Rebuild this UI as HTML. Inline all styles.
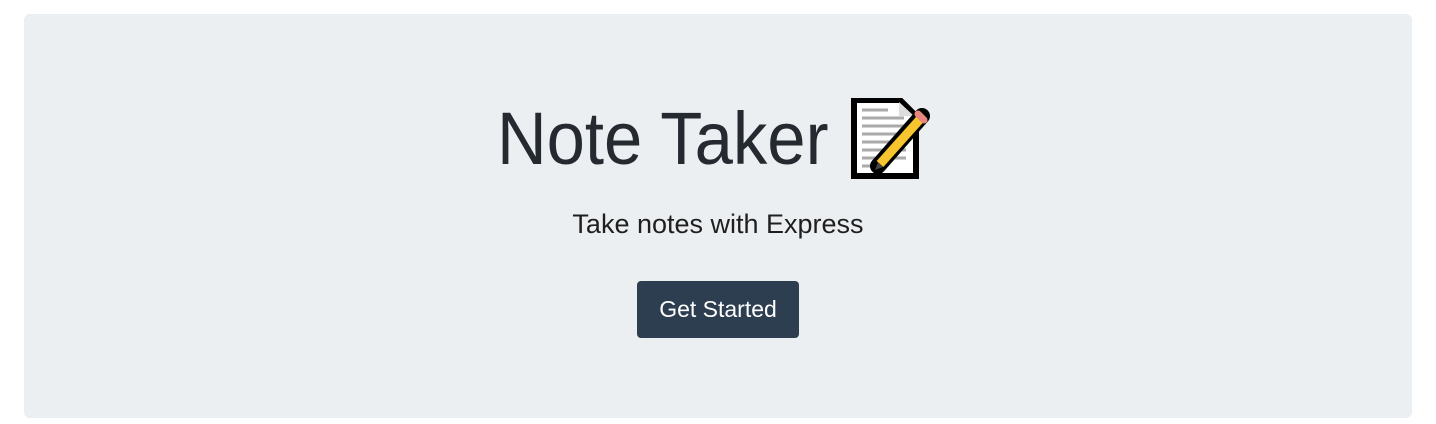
<!DOCTYPE html>
<html><head><style>
body{margin:0;background:#fff;width:1436px;height:424px;overflow:hidden;font-family:"Liberation Sans",sans-serif}
.j{position:absolute;left:24px;top:14px;width:1388px;height:404px;background:#eceff1;border-radius:6px}
h1{position:absolute;left:0;width:1436px;top:96px;margin:0;font-weight:normal;font-size:74px;line-height:86px;color:#252a31;text-align:center}
.t{display:inline-block;transform:scaleX(0.93);transform-origin:right center;vertical-align:top}
p{position:absolute;left:0;width:1436px;top:206px;margin:0;text-align:center;font-size:27px;line-height:36px;color:#1f1f1f}
.p2{display:inline-block;transform:scaleX(1.0)}
.b{position:absolute;left:637px;top:281px;width:162px;height:57px;background:#2c3e50;border-radius:4px;color:#fff;font-size:23px;line-height:57px;text-align:center}
svg{position:absolute;left:850px;top:98px}
</style></head><body>
<div class="j"></div>
<h1><span class="t">Note Taker</span><span style="display:inline-block;width:136px"></span></h1>
<svg width="84" height="82" viewBox="0 0 84 82">
<path d="M4 2H50L66 18V78H4Z" fill="#fff" stroke="#000" stroke-width="6" stroke-linejoin="miter"/>
<path d="M49 4V18H64" fill="#ddd"/>
<g stroke="#aaa" stroke-width="3">
<line x1="12" y1="12" x2="38" y2="12"/><line x1="12" y1="20" x2="54" y2="20"/><line x1="12" y1="28" x2="54" y2="28"/><line x1="12" y1="36" x2="54" y2="36"/><line x1="12" y1="44" x2="56" y2="44"/><line x1="12" y1="52" x2="56" y2="52"/><line x1="12" y1="60" x2="56" y2="60"/><line x1="12" y1="68" x2="30" y2="68"/></g>
<path d="M28 68L72 18" stroke="#000" stroke-width="16" stroke-linecap="round"/>
<path d="M30 66L72 19" stroke="#f7c52d" stroke-width="9"/>
<path d="M68 16L74 22" stroke="#e8877e" stroke-width="7" stroke-linecap="round"/>
<path d="M25 72L28 64L33 69Z" fill="#444"/>
</svg>
<p><span class="p2">Take notes with Express</span></p>
<div class="b">Get Started</div>
</body></html>
